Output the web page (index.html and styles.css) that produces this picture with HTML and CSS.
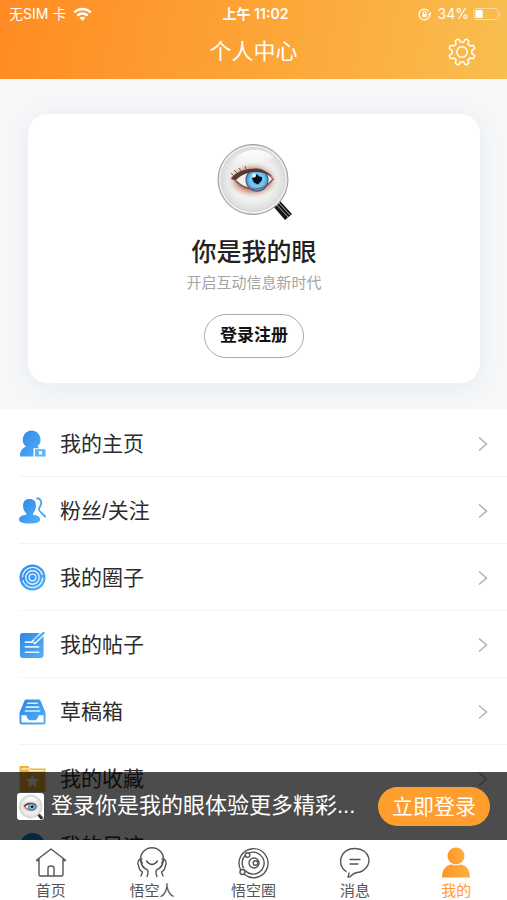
FILE: index.html
```html
<!DOCTYPE html>
<html lang="zh-CN">
<head>
<meta charset="utf-8">
<meta name="viewport" content="width=device-width, initial-scale=1">
<title>个人中心</title>
<link rel="stylesheet" href="styles.css">
</head>
<body>
<svg class="defs" aria-hidden="true">
  <defs>
    <linearGradient id="blue" x1="0" y1="0" x2="1" y2="1"><stop offset="0" stop-color="#2f86e4"/><stop offset="1" stop-color="#52b2fa"/></linearGradient>
    <linearGradient id="orange" x1="0" y1="0" x2="1" y2="0"><stop offset="0" stop-color="#ff9526"/><stop offset="1" stop-color="#fcb043"/></linearGradient>
    <radialGradient id="lens" cx=".5" cy=".5" r=".5"><stop offset="0" stop-color="#f6f2f0"/><stop offset=".65" stop-color="#efefef"/><stop offset=".88" stop-color="#dedede"/><stop offset="1" stop-color="#c8c8c8"/></radialGradient>
    <radialGradient id="skin"><stop offset="0" stop-color="#9d6558"/><stop offset=".62" stop-color="#c08e7d" stop-opacity=".9"/><stop offset="1" stop-color="#efd9cd" stop-opacity="0"/></radialGradient>
    <radialGradient id="iris"><stop offset="0" stop-color="#318fd2"/><stop offset=".55" stop-color="#7accf8"/><stop offset=".82" stop-color="#5aa8de"/><stop offset="1" stop-color="#1c4c80"/></radialGradient>
    <linearGradient id="shine" x1="0" y1="0" x2="0" y2="1"><stop offset="0" stop-color="#fff"/><stop offset="1" stop-color="#fff" stop-opacity="0"/></linearGradient>
    <symbol id="eye" viewBox="0 0 76 80">
      <path d="M57 65 64 60 76 73 69 79Z" fill="#171717"/>
      <path d="M60 63 72 76M63 62 74 74" stroke="#aaa" stroke-width="1"/>
      <circle cx="37" cy="38.500" r="35" fill="url(#lens)" stroke="#a0a0a0" stroke-width="1"/>
      <circle cx="37" cy="38.500" r="33.200" fill="none" stroke="#f5f5f5" stroke-width="1.200"/>
      <path d="M14 25C19 9 44 3 58 16 49 25 29 20 14 25Z" fill="url(#shine)"/>
      <ellipse cx="37" cy="39" rx="26" ry="18" fill="url(#skin)"/>
      <path d="M15 37C22 27 45 22 58 38 49 53 30 53 15 37Z" fill="#b07a6b"/>
      <path d="M20 39C27 29 46 27 56 38 47 50 31 50 20 39Z" fill="#f4eeee"/>
      <circle cx="41" cy="39" r="11.500" fill="url(#iris)"/>
      <path d="M41 33 43 35.500 46 36 46 39 42 43.500 38 41.500 36 37.500Z" fill="#05101d"/>
      <circle cx="38" cy="34.500" r="2" fill="#e4f7ff"/>
      <path d="M15 38C23 27 45 23 57 36 45 29 30 29 20 39Z" fill="#5a3630"/>
      <path d="M18 35 15 32M21 32 18 29M25 30 23 27M30 28 29 25" stroke="#7d5a50" stroke-width="1"/>
      <path d="M20 40C30 51 48 51 57 38" fill="none" stroke="#8d5248" stroke-width="1.200"/>
    </symbol>
  </defs>
</svg>
<div class="app">
  <header class="header">
    <div class="status">
      <div class="status-side">
        <span>无SIM 卡</span>
        <svg width="19" height="15" viewBox="0 0 19 15" fill="none" stroke="#fff" stroke-width="2.5"><path d="M1.2 5.4C6 .8 13 .8 17.8 5.4M4.300 8.600C7.300 5.900 11.700 5.900 14.700 8.600"/><path d="M6.500 10.700C8.200 9.300 10.800 9.300 12.500 10.700L9.500 14Z" fill="#fff" stroke="none"/></svg>
      </div>
      <strong class="time">上午 11:02</strong>
      <div class="status-side status-end">
        <svg width="13" height="13" viewBox="0 0 13 13" fill="none" stroke="#fff" stroke-width="1.2"><path d="M10.800 3.300A5.400 5.400 0 1 0 11.800 7M12.500 4.500 11.800 7.200 9.800 5.500"/><path d="M4.300 6h4.400v3.300H4.300Z" fill="#fff" stroke="none"/><path d="M5.200 6V4.800a1.300 1.300 0 0 1 2.600 0V6"/></svg>
        <span>34%</span>
        <svg width="29" height="14" viewBox="0 0 29 14"><rect x=".7" y="1.5" width="24.6" height="11" rx="3" fill="none" stroke="#fff" stroke-opacity=".45"/><rect x="2.3" y="3" width="7.5" height="8" rx="1" fill="#fff"/><path d="M26.600 5Q29 7 26.600 9Z" fill="#fff" opacity=".5"/></svg>
      </div>
    </div>
    <div class="titlebar">
      <h1>个人中心</h1>
      <button class="settings" aria-label="设置">
        <svg width="30" height="30" viewBox="-15 -15 30 30" fill="none" stroke="#fff" stroke-width="1.5" stroke-linejoin="round"><path d="M1.6-9.9 3.3-12.6Q5-13 6.6-11.2L5.9-8.1 8.1-5.9 11.2-6.6Q13-5 12.6-3.3L9.9-1.6 9.9 1.6 12.6 3.3Q13 5 11.2 6.6L8.1 5.9 5.9 8.1 6.6 11.2Q5 13 3.3 12.6L1.6 9.9-1.6 9.9-3.3 12.6Q-5 13-6.6 11.2L-5.9 8.1-8.1 5.9-11.2 6.6Q-13 5-12.6 3.3L-9.9 1.6-9.9-1.6-12.6-3.3Q-13-5-11.2-6.6L-8.1-5.9-5.9-8.1-6.6-11.2Q-5-13-3.3-12.6L-1.6-9.9Z"/><circle r="5.2"/></svg>
      </button>
    </div>
  </header>

  <main class="content">
    <section class="hero">
      <div class="card">
        <svg class="logo" role="img" aria-label="你是我的眼"><use href="#eye"/></svg>
        <h2>你是我的眼</h2>
        <p>开启互动信息新时代</p>
        <button class="register">登录注册</button>
      </div>
    </section>
    <nav class="menu" aria-label="个人菜单">
      <a href="#home">
        <svg class="icon" viewBox="0 0 28 28"><path fill="url(#blue)" d="M13 .5a9.500 9.500 0 0 1 6.500 16.200l1 2.300H15v8.500H1c0-6 2-8 6-10.500A9.500 9.500 0 0 1 13 .5Z"/><path fill="#5bb5f8" fill-rule="evenodd" d="M16.500 20H27.500V27.500H16.500ZM20.500 22v3.500h3.500v-3.500Z"/></svg>
        <span>我的主页</span><svg class="chevron" viewBox="0 0 10 16"><path d="m1 1.500 7.500 6.500L1 14.500"/></svg>
      </a>
      <a href="#fans">
        <svg class="icon" viewBox="0 0 28 28"><path fill="url(#blue)" d="M11 2C16 2 18 5 17.500 10 17.300 13 16 15.500 14.500 17V18.500C19 19 22 20.500 22 23.500 22 26 18 27.500 11 27.500S0 26 0 23.500C0 20.500 3 19 7.500 18.500V17C6 15.500 4.500 13 4.200 10 4 5 6 2 11 2Z"/><path d="M18 1.300C23 1.300 24.500 6 21.500 10.500 19.500 14 21.500 15 23.500 16.500 25.500 18 25.500 20.500 28 20.500" fill="none" stroke="#4ba7f2" stroke-width="2"/></svg>
        <span>粉丝/关注</span><svg class="chevron" viewBox="0 0 10 16"><path d="m1 1.500 7.500 6.500L1 14.500"/></svg>
      </a>
      <a href="#circles">
        <svg class="icon" viewBox="0 0 28 28"><circle cx="14" cy="14" r="13.500" fill="url(#blue)"/><g fill="none" stroke="#e5f4ff" stroke-width="1.300"><circle cx="14" cy="14" r="10.500" stroke-dasharray="30 3"/><circle cx="14" cy="14" r="7"/><circle cx="14" cy="14" r="3.500"/></g></svg>
        <span>我的圈子</span><svg class="chevron" viewBox="0 0 10 16"><path d="m1 1.500 7.500 6.500L1 14.500"/></svg>
      </a>
      <a href="#posts">
        <svg class="icon" viewBox="0 0 28 28"><rect x="1" y="2" width="24.500" height="26" rx="3" fill="url(#blue)"/><path d="M6 11.500H14M6 16.500h15M6 22h15" stroke="#e5f4ff" stroke-width="1.700"/><path d="M14.500 12.500 26 1.500" stroke="#fff" stroke-width="5"/><path d="m14.500 12.500 1.500-4L25.500.500l1.500 1.500-9 9Z" fill="#4ba7f2"/></svg>
        <span>我的帖子</span><svg class="chevron" viewBox="0 0 10 16"><path d="m1 1.500 7.500 6.500L1 14.500"/></svg>
      </a>
      <a href="#drafts">
        <svg class="icon" viewBox="0 0 28 28"><path d="M8 1.500h12q2 0 2.500 1.500L27.500 15v10.500q0 2-2 2h-23q-2 0-2-2V15L5.500 3q.500-1.500 2.500-1.500Z" fill="url(#blue)"/><path d="M2.500 18H7.500Q9 23 11 23h6Q19 23 20.500 18h5v7.500h-23Z" fill="#fff"/><path d="M8.500 5.500h11M7 9.500h14M6 13.500h16" stroke="#d9efff" stroke-width="1.700"/></svg>
        <span>草稿箱</span><svg class="chevron" viewBox="0 0 10 16"><path d="m1 1.500 7.500 6.500L1 14.500"/></svg>
      </a>
      <a href="#favorites">
        <svg class="icon" viewBox="0 0 28 28"><path d="M.500 1h9l2 2.500h16V28H.500Z" fill="#f4b22e"/><path d="M2.500 4h8l1 2h15" fill="none" stroke="#fff0c7" stroke-width="1.500"/><path d="m14 10 2 4.500 5 .500-3.800 3.300 1.200 4.700-4.400-2.500L9.600 23l1.200-4.700L7 15l5-.500Z" fill="#fff"/></svg>
        <span>我的收藏</span><svg class="chevron" viewBox="0 0 10 16"><path d="m1 1.500 7.500 6.500L1 14.500"/></svg>
      </a>
      <a href="#history">
        <svg class="icon" viewBox="0 0 28 28"><circle cx="14" cy="14" r="13" fill="#168bdc"/><path d="M14 9v5l5 3" fill="none" stroke="#fff" stroke-width="2"/></svg>
        <span>我的足迹</span><svg class="chevron" viewBox="0 0 10 16"><path d="m1 1.500 7.500 6.500L1 14.500"/></svg>
      </a>
    </nav>
    <aside class="login-bar">
      <svg class="badge" viewBox="0 0 27 27" aria-hidden="true"><rect width="27" height="27" rx="3" fill="#fff"/><use href="#eye" x="1" y="1" width="26" height="26"/></svg>
      <span class="login-text">登录你是我的眼体验更多精彩...</span>
      <button>立即登录</button>
    </aside>
  </main>

  <nav class="tabs" aria-label="主导航">
    <a href="#index"><svg viewBox="0 0 32 32"><path d="M1.500 13.500 3 12 16 2l13 10 1.500 1.500M4 12v15.500q0 1.500 1.500 1.500h21q1.500 0 1.500-1.500V12M13 29v-8q0-2 3-2t3 2v8M1.500 13.500H4M28 13.500h2.500"/></svg><span>首页</span></a>
    <a href="#people"><svg viewBox="0 0 32 32"><path d="M8.500 21A11.500 11.500 0 1 1 23.500 21M10.500 14q5.500 7 11 0M6 12C3.500 12 1.500 13 2 17l1.500 5q.500 1.500 3 3L5 29M6 18q.500 2.500 4 4t1 7.500M26 12c2.500 0 4.500 1 4 5l-1.500 5q-.500 1.500-3 3l1.500 4M26 18q-.500 2.500-4 4t-1 7.500M4 13q2.500 1 2 5M28 13q-2.500 1-2 5"/></svg><span>悟空人</span></a>
    <a href="#groups"><svg viewBox="0 0 32 32"><path d="M12.300 5.800A11 11 0 1 1 8 23.500M6.500 21A11 11 0 0 1 8.500 8"/><path d="M3.500 22.500A14.500 14.500 0 1 1 7.500 27.500"/><circle cx="10.500" cy="8" r="2.300"/><circle cx="5.500" cy="25" r="2.500"/><circle cx="17" cy="16" r="5"/><circle cx="18.500" cy="16" r="2.300"/></svg><span>悟空圈</span></a>
    <a href="#messages"><svg viewBox="0 0 32 32"><path d="M7 24.500C-3 18 1 1.500 16 1.500s20 17 5 23.500q-6 .500-9 4-2 1.500-3 1 1-2 1-4"/><path d="M11 12.500h10M11 17h8"/></svg><span>消息</span></a>
    <a class="active" href="#me" aria-current="page"><svg viewBox="0 0 32 32"><circle cx="16" cy="9" r="8.500" fill="url(#orange)"/><path d="M2 30.500c0-9 5-13 10-13q4 2 8 0c5 0 10 4 10 13Z" fill="url(#orange)"/></svg><span>我的</span></a>
  </nav>
</div>
</body>
</html>
```
FILE: styles.css
```css
* { box-sizing: border-box; }

body {
  margin: 0;
  font-family: "Liberation Sans", "Noto Sans CJK SC", sans-serif;
  color: #2c2c2c;
  background: #fff;
}

button { font: inherit; cursor: pointer; }
a { color: inherit; text-decoration: none; }
h1, h2, p { margin: 0; }
svg { display: block; flex: none; }
.defs { position: absolute; width: 0; height: 0; }

.app {
  display: flex;
  flex-direction: column;
  height: 100vh;
}

.header {
  flex: none;
  height: 79px;
  color: #fff;
  background: linear-gradient(100deg, #ff8b22, #fca738 55%, #f9be50);
}

.status {
  display: grid;
  grid-template-columns: 1fr auto 1fr;
  align-items: center;
  height: 28px;
  padding: 0 5px 0 9px;
  font-family: Inter, "Noto Sans CJK SC", sans-serif;
  font-size: 14px;
  line-height: 28px;
}

.status-side { display: flex; align-items: center; gap: 7px; }
.status-end { justify-content: flex-end; gap: 4px; }
.status-end span { padding-left: 3px; }
.time { font-weight: 600; }

.titlebar {
  display: grid;
  grid-template-columns: 1fr auto 1fr;
  align-items: center;
  height: 48px;
  padding: 0 30px;
}

h1 {
  grid-column: 2;
  font-size: 22px;
  font-weight: 400;
  line-height: 32px;
}

.settings {
  justify-self: end;
  padding: 0;
  border: 0;
  background: none;
}

.content {
  position: relative;
  flex: 1;
  min-height: 0;
  overflow: hidden;
}

.hero {
  padding: 35px 27px 26px 28px;
  background: #f5f7f9;
}

.card {
  display: flex;
  flex-direction: column;
  align-items: center;
  padding: 27px 16px 25px;
  border-radius: 20px;
  background: #fff;
  box-shadow: 0 4px 24px rgba(40, 50, 60, .06);
}

.logo { width: 76px; height: 80px; }

h2 {
  margin-top: 13px;
  color: #222;
  font-size: 25px;
  font-weight: 500;
  line-height: 36px;
}

.card p {
  margin-top: 2px;
  color: #a5a5a5;
  font-size: 15px;
  line-height: 22px;
}

.register {
  height: 44px;
  margin-top: 20px;
  padding: 0 15px;
  border: 1px solid #aaa;
  border-radius: 22px;
  background: #fff;
  color: #111;
  font-size: 17px;
  font-weight: 700;
  line-height: 42px;
}

.menu { padding-top: 1px; }

.menu a {
  display: flex;
  align-items: center;
  position: relative;
  height: 67px;
  padding: 0 19px;
  font-size: 21px;
  line-height: 32px;
}

.menu a::after {
  content: "";
  position: absolute;
  right: 0;
  bottom: 0;
  left: 19px;
  height: 1px;
  background: #f3f3f3;
}

.menu span { flex: 1; margin-left: 14px; }
.icon { width: 27px; height: 27px; }
.chevron {
  width: 10px;
  height: 16px;
  fill: none;
  stroke: #b4b4b4;
  stroke-width: 1.6;
}

.login-bar {
  position: absolute;
  right: 0;
  bottom: 0;
  left: 0;
  display: flex;
  align-items: center;
  height: 68px;
  padding: 0 17px;
  background: rgba(0, 0, 0, .7);
  color: #fff;
}

.badge { width: 27px; height: 27px; }

.login-text {
  flex: 1;
  min-width: 0;
  margin-left: 7px;
  overflow: hidden;
  font-size: 22px;
  line-height: 34px;
  white-space: nowrap;
}

.login-bar button {
  height: 39px;
  padding: 0 14px;
  border: 0;
  border-radius: 20px;
  background: #ff9d2e;
  color: #fff;
  font-size: 21px;
  line-height: 39px;
}

.tabs {
  flex: none;
  display: grid;
  grid-template-columns: repeat(5, 1fr);
  height: 60px;
  background: #fff;
}

.tabs a {
  display: flex;
  flex-direction: column;
  align-items: center;
  padding-top: 7px;
  color: #555;
  font-size: 15px;
  line-height: 24px;
}

.tabs svg {
  width: 32px;
  height: 32px;
  fill: none;
  stroke: #555;
  stroke-width: 1.4;
  stroke-linecap: round;
  stroke-linejoin: round;
}

.tabs .active { color: #ff9c35; }
.tabs .active svg { stroke: none; }
```
